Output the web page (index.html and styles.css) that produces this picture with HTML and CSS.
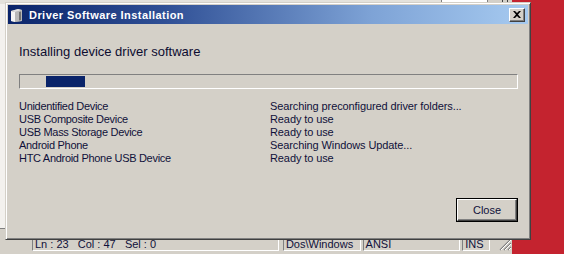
FILE: index.html
```html
<!DOCTYPE html>
<html>
<head>
<meta charset="utf-8">
<link rel="stylesheet" href="styles.css">
</head>
<body>
<div class="desktop">
  <div class="app">
    <div class="app-top">
      <div class="top-fill"></div>
      <div class="top-field"></div>
      <div class="top-gap"></div>
      <div class="top-sep"></div>
      <div class="top-sep"></div>
    </div>
    <div class="app-mid">
      <div class="editor"></div>
    </div>
    <div class="statusbar">
      <div class="panel p-pos">Ln : 23&nbsp;&nbsp;&nbsp;Col : 47&nbsp;&nbsp;&nbsp;Sel : 0</div>
      <div class="panel p-eol">Dos\Windows</div>
      <div class="panel p-enc">ANSI</div>
      <div class="panel p-ins">INS</div>
      <div class="grip">
        <svg width="14" height="14" viewBox="0 0 14 14">
          <path d="M13 2 L2 13 M13 6 L6 13 M13 10 L10 13" stroke="#808080" stroke-width="1.2"/>
          <path d="M13 3 L3 13 M13 7 L7 13 M13 11 L11 13" stroke="#ffffff" stroke-width="1"/>
        </svg>
      </div>
    </div>
  </div>
  <div class="desk-red"></div>

  <div class="dialog">
    <div class="titlebar">
      <svg class="t-icon" width="13" height="15" viewBox="0 0 13 15">
        <path d="M1 3 L8 1 L12 2 L12 13 L5 14 L1 13 Z" fill="#9a9a9a"/>
        <path d="M1 3 L5 4 L5 14 L1 13 Z" fill="#f4f4f4"/>
        <path d="M5 4 L12 2 L12 13 L5 14 Z" fill="#b8b8b8"/>
        <path d="M1 3 L8 1 L12 2 L5 4 Z" fill="#e0e0e0"/>
        <path d="M9 4 L11 3.5 L11 12 L9 12.5 Z" fill="#707070"/>
      </svg>
      <span class="t-text">Driver Software Installation</span>
      <div class="t-close">
        <svg width="8" height="7" viewBox="0 0 8 7">
          <path d="M0 0 H2 L4 2 L6 0 H8 L5 3.5 L8 7 H6 L4 5 L2 7 H0 L3 3.5 Z" fill="#000"/>
        </svg>
      </div>
    </div>
    <div class="content">
      <div class="heading">Installing device driver software</div>
      <div class="progress"><div class="fill"></div></div>
      <div class="devices">
        <div class="row"><span class="name">Unidentified Device</span><span class="state">Searching preconfigured driver folders...</span></div>
        <div class="row"><span class="name">USB Composite Device</span><span class="state">Ready to use</span></div>
        <div class="row"><span class="name">USB Mass Storage Device</span><span class="state">Ready to use</span></div>
        <div class="row"><span class="name">Android Phone</span><span class="state">Searching Windows Update...</span></div>
        <div class="row"><span class="name">HTC Android Phone USB Device</span><span class="state">Ready to use</span></div>
      </div>
      <div class="actions">
        <div class="btn"><div class="btn-inner">Close</div></div>
      </div>
    </div>
  </div>
</div>
</body>
</html>
```

FILE: styles.css
```css
* { box-sizing: border-box; }
html, body { margin: 0; padding: 0; }
body {
  width: 564px;
  height: 254px;
  overflow: hidden;
  font-family: "Liberation Sans", Arial, sans-serif;
  font-size: 11px;
  color: #000;
}
.desktop {
  position: relative;
  width: 564px;
  height: 254px;
  display: flex;
}
.app {
  width: 512px;
  height: 254px;
  display: flex;
  flex-direction: column;
  background: #d4d0c8;
}
.desk-red {
  flex: 1;
  background: #c4232f;
}
.app-top {
  height: 4px;
  display: flex;
  background: #e4e2dc;
}
.top-fill { width: 441px; }
.top-field {
  width: 47px;
  background: #fff;
  border-left: 1px solid #808080;
  border-right: 1px solid #808080;
}
.top-gap { width: 14px; background: #d4d0c8; }
.top-sep {
  width: 5px;
  border-left: 1px solid #404040;
  background: #d4d0c8;
}
.app-mid {
  flex: 1;
  display: flex;
  border-bottom: 1px solid #808080;
}
.editor {
  width: 7px;
  background: #f3f1ee;
  border-right: 1px solid #fff;
}
.statusbar {
  height: 25px;
  display: flex;
  align-items: flex-start;
  padding: 4px 0 0 32px;
  gap: 2px;
  background: #d4d0c8;
}
.panel {
  height: 18px;
  border-top: 1px solid #808080;
  border-left: 1px solid #808080;
  border-bottom: 1px solid #fff;
  border-right: 1px solid #fff;
  padding: 4px 0 0 2px;
  line-height: 12px;
  white-space: nowrap;
  overflow: hidden;
  color: #10103a;
}
.p-pos { width: 248px; }
.p-eol { width: 78px; margin-left: 2px; }
.p-enc { width: 98px; }
.p-ins { width: 28px; }
.grip {
  width: 18px;
  height: 18px;
  display: flex;
  align-items: flex-end;
  justify-content: flex-end;
  margin-left: 2px;
}

/* dialog window */
.dialog {
  position: absolute;
  left: 5px;
  top: 2px;
  width: 526px;
  height: 238px;
  background: #d4d0c8;
  border: 1px solid;
  border-color: #d4d0c8 #404040 #404040 #d4d0c8;
  box-shadow: inset 1px 1px 0 #fff, inset -1px -1px 0 #808080;
  padding: 2px;
  display: flex;
  flex-direction: column;
}
.titlebar {
  height: 19px;
  display: flex;
  align-items: center;
  padding: 0 3px 0 2px;
  background: linear-gradient(to right, #0a246a 0%, #2f4f95 30%, #7ea3d6 70%, #a6caf0 100%);
}
.t-icon { flex: none; margin-top: 1px; }
.t-text {
  margin-left: 6px;
  color: #fff;
  font-weight: bold;
  font-size: 11px;
  letter-spacing: 0.45px;
  flex: 1;
}
.t-close {
  width: 16px;
  height: 14px;
  background: #d4d0c8;
  border: 1px solid;
  border-color: #fff #404040 #404040 #fff;
  box-shadow: inset -1px -1px 0 #808080;
  display: flex;
  align-items: center;
  justify-content: center;
  padding-bottom: 1px;
}
.content {
  flex: 1;
  display: flex;
  flex-direction: column;
  padding: 20px 10px 0 11px;
  color: #10103a;
}
.heading {
  font-size: 13px;
  line-height: 16px;
  color: #0c0c30;
}
.progress {
  margin-top: 14px;
  height: 15px;
  border-top: 1px solid #808080;
  border-left: 1px solid #808080;
  border-bottom: 1px solid #fff;
  border-right: 1px solid #fff;
  padding: 1px 0 0 26px;
}
.fill {
  width: 39px;
  height: 11px;
  background: #0a246a;
}
.devices {
  margin-top: 11px;
}
.row {
  display: flex;
  line-height: 13px;
  height: 13px;
}
.name { width: 251px; letter-spacing: -0.3px; }
.state { flex: 1; letter-spacing: -0.1px; }
.actions {
  display: flex;
  justify-content: flex-end;
  margin-top: 33px;
}
.btn {
  width: 62px;
  height: 24px;
  border: 1px solid #000;
  background: #d4d0c8;
}
.btn-inner {
  height: 100%;
  border: 1px solid;
  border-color: #fff #404040 #404040 #fff;
  box-shadow: inset -1px -1px 0 #808080;
  display: flex;
  align-items: center;
  justify-content: center;
  font-size: 11px;
  color: #10103a;
}
```
